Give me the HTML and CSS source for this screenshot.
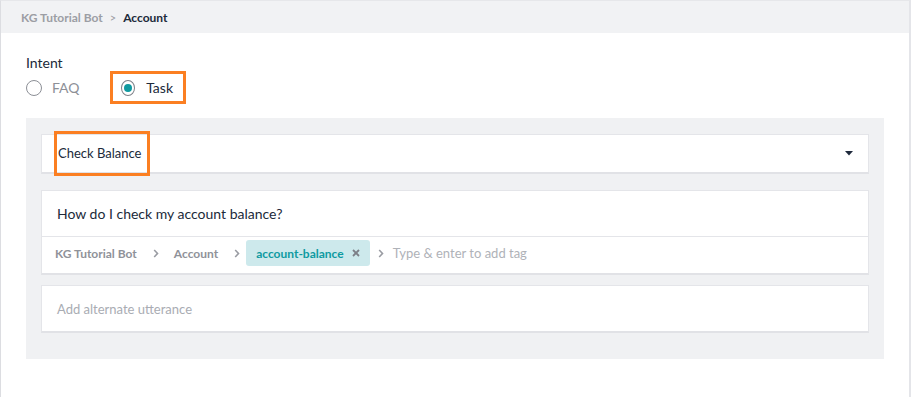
FILE: index.html
```html
<!DOCTYPE html>
<html>
<head>
<meta charset="utf-8">
<link rel="stylesheet" href="styles.css">
</head>
<body>
<div class="frame">
  <div class="topbar">
    <span class="crumb-muted">KG Tutorial Bot</span>
    <span class="crumb-sep">&gt;</span>
    <span class="crumb-current">Account</span>
  </div>
  <div class="content">
    <div class="intent-label">Intent</div>
    <div class="radios">
      <label class="radio">
        <span class="radio-circle"></span>
        <span class="radio-text muted">FAQ</span>
      </label>
      <label class="radio radio-highlight">
        <span class="radio-circle checked"><span class="radio-dot"></span></span>
        <span class="radio-text">Task</span>
      </label>
    </div>
    <div class="panel">
      <div class="card select">
        <span class="select-value">Check Balance</span>
        <svg class="caret" width="8" height="5" viewBox="0 0 8 5"><path d="M0 0 H8 L4 4.5 Z" fill="#1f2a3c"/></svg>
      </div>
      <div class="card utterance">
        <div class="question">How do I check my account balance?</div>
        <div class="tags">
          <span class="path">KG Tutorial Bot</span>
          <svg class="chev chev-a" width="6" height="9" viewBox="0 0 6 9"><path d="M1.2 1 L4.5 4.5 L1.2 8" fill="none" stroke="#9a9ca3" stroke-width="1.6"/></svg>
          <span class="path">Account</span>
          <svg class="chev chev-b" width="6" height="9" viewBox="0 0 6 9"><path d="M1.2 1 L4.5 4.5 L1.2 8" fill="none" stroke="#9a9ca3" stroke-width="1.6"/></svg>
          <span class="tag">account-balance<svg class="tag-x" width="8" height="8" viewBox="0 0 8 8"><path d="M1 1 L7 7 M7 1 L1 7" stroke="#7d8088" stroke-width="1.8"/></svg></span>
          <svg class="chev chev-c" width="6" height="9" viewBox="0 0 6 9"><path d="M1.2 1 L4.5 4.5 L1.2 8" fill="none" stroke="#9a9ca3" stroke-width="1.6"/></svg>
          <span class="tag-input">Type &amp; enter to add tag</span>
        </div>
      </div>
      <div class="card alt">
        <span class="alt-placeholder">Add alternate utterance</span>
      </div>
    </div>
  </div>
</div>
</body>
</html>
```
FILE: styles.css
```css
* { box-sizing: border-box; }
html, body { margin: 0; padding: 0; background: #ffffff; }
body { font-family: Lato, "Open Sans", Arial, sans-serif; color: #202a3a; }

.frame {
  width: 911px;
  height: 397px;
  border-left: 1px solid #dcdde1;
  border-right: 2px solid #e4e5e9;
  border-top: 1px solid #e6e7ea;
  background: #fff;
}

.topbar {
  height: 32px;
  background: #f1f2f4;
  display: flex;
  align-items: center;
  padding-left: 20px;
  font-size: 12px;
  font-weight: 700;
  gap: 5px;
}
.crumb-muted { color: #9c9ea4; }
.crumb-sep { color: #9c9ea4; font-weight: 400; font-size: 11px; padding: 0 2px; }
.crumb-current { color: #202a3a; }

.content { padding: 21px 25px 0 25px; }

.intent-label { font-size: 14px; color: #202a3a; line-height: 17px; }

.radios { display: flex; align-items: center; height: 33px; }
.radio { display: flex; align-items: center; height: 33px; }
.radio:first-child { width: 84px; }
.radio-circle {
  width: 16px; height: 16px; border-radius: 50%;
  border: 1px solid #8c8f96; display: flex; align-items: center; justify-content: center;
}
.radio-circle.checked { border-color: #7d8088; }
.radio-dot { width: 8px; height: 8px; border-radius: 50%; background: #119aa0; }
.radio-text { font-size: 14px; margin-left: 10px; color: #202a3a; }
.radio-text.muted { color: #8d9097; }
.radio-highlight {
  border: 3px solid #fb7f22;
  padding: 0 10px 0 8px;
  width: 76px;
}
.radio-highlight .radio-text { margin-left: 11px; }

.panel {
  margin-top: 14px;
  width: 858px;
  background: #f0f1f3;
  padding: 16px 15px 26px 15px;
  display: flex;
  flex-direction: column;
}

.card {
  background: #fff;
  border: 1px solid #e4e5e9;
  border-bottom: 2px solid #e1e2e6;
}

.select {
  height: 40px;
  display: flex;
  align-items: center;
  justify-content: space-between;
  padding: 0 15px 0 12px;
}
.select-value {
  font-size: 13px;
  color: #202a3a;
  border: 3px solid #fb7f22;
  height: 45px;
  margin-top: -1px;
  width: 96px;
  display: flex;
  align-items: center;
  padding-left: 1px;
}

.utterance { height: 85px; display: flex; flex-direction: column; margin-top: 16px; }
.question {
  height: 46px;
  display: flex;
  align-items: center;
  padding-left: 15px;
  font-size: 14px;
  color: #202a3a;
  border-bottom: 1px solid #e4e5e9;
}
.tags {
  flex: 1;
  display: flex;
  align-items: center;
  padding-left: 13px;
  padding-bottom: 4px;
  font-size: 12px;
  white-space: nowrap;
}
.path { color: #8f9299; font-weight: 700; }
.chev-a { margin: 0 15px 0 16px; }
.chev-b { margin: 0 6px 0 16px; }
.chev-c { margin: 0 9px 0 8px; }
.tag {
  background: #cde9ec;
  color: #0f9aa1;
  font-weight: 700;
  height: 26px;
  border-radius: 3px;
  display: flex;
  align-items: center;
  padding: 0 10px 0 10px;
  gap: 8px;
  white-space: nowrap;
}
.tag-input { color: #afb2b8; font-size: 13px; }

.alt {
  height: 48px;
  display: flex;
  align-items: center;
  padding-left: 15px;
  margin-top: 10px;
}
.alt-placeholder { color: #a9acb3; font-size: 13px; }
```
